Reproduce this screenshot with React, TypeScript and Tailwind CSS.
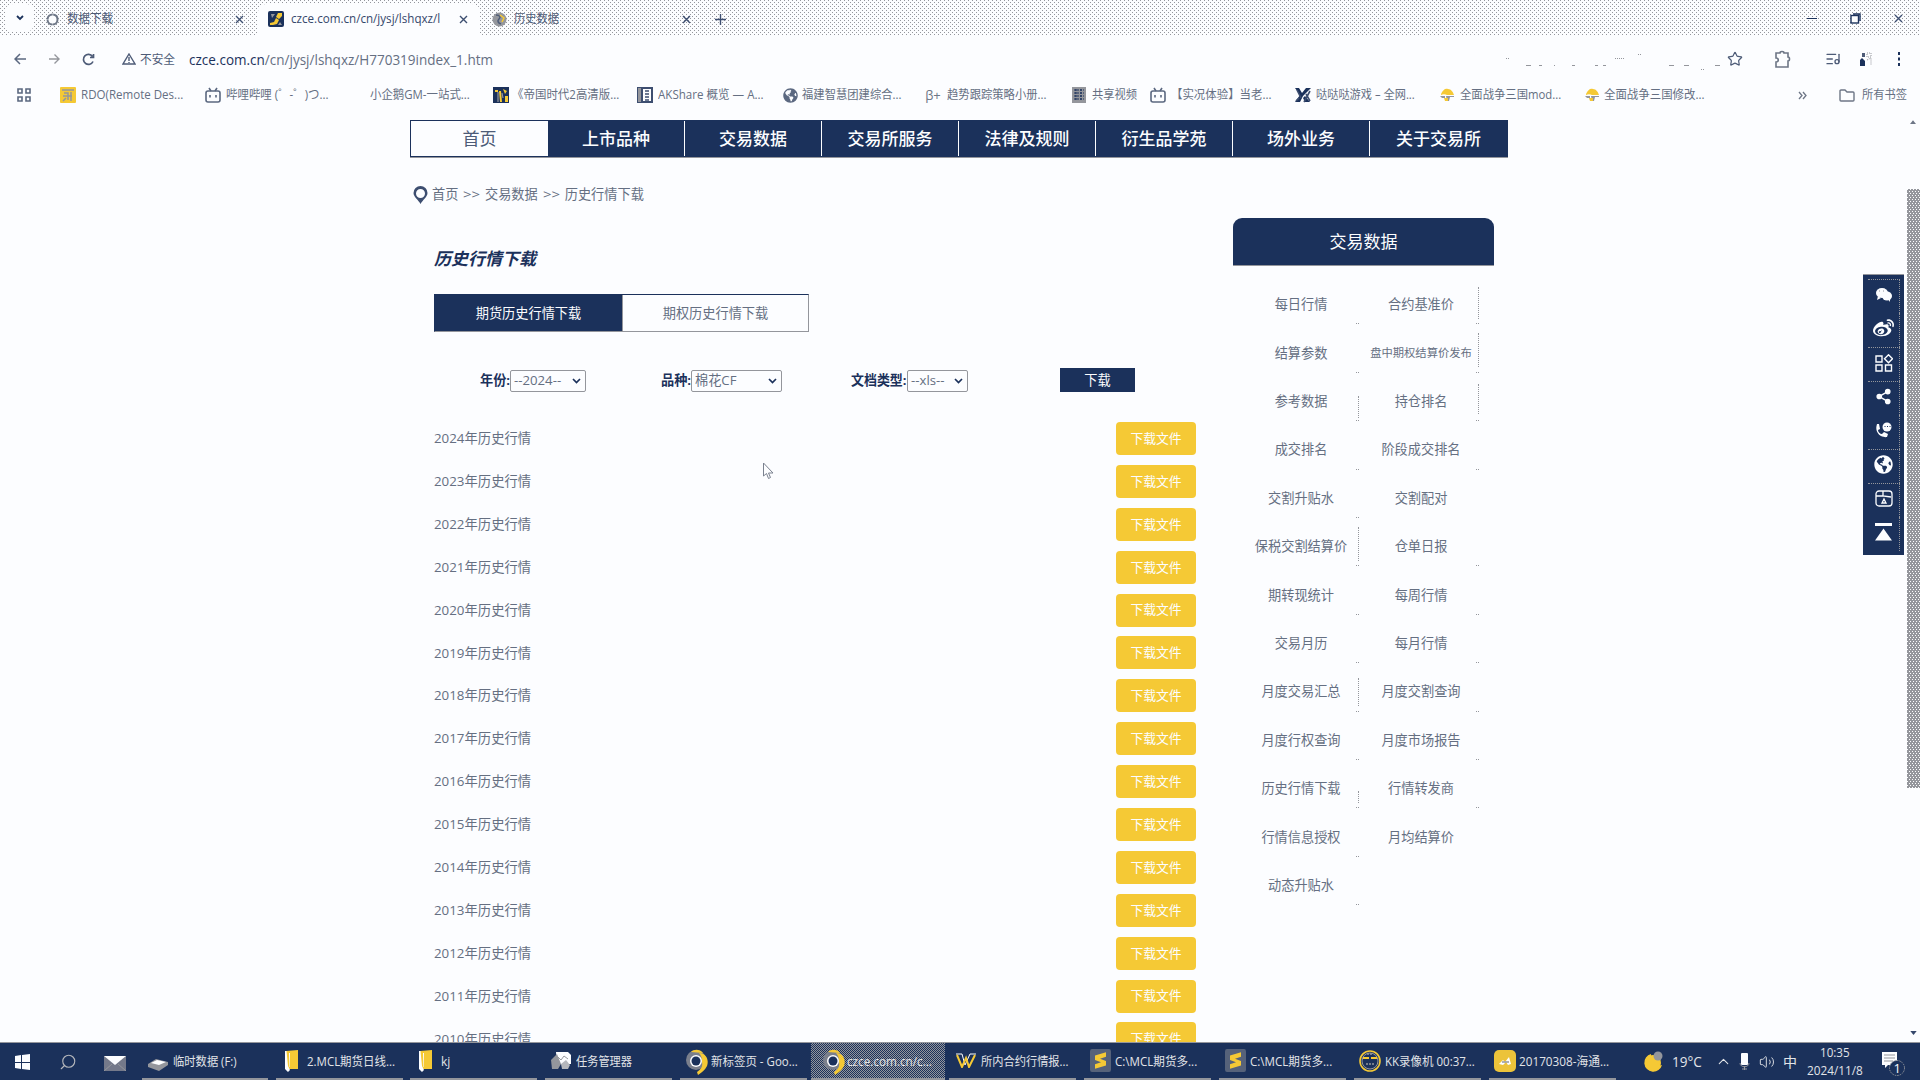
import React from "react";
import { Star, ListMusic, Search, Volume2, ChevronUp, Share2 } from "lucide-react";
import { FaWeibo, FaGlobeAmericas } from "react-icons/fa";

const DITHER =
  "bg-[conic-gradient(at_1px_1px,transparent_75%,#94969c_0),conic-gradient(at_1px_1px,transparent_75%,#94969c_0)] bg-[length:4px_4px] bg-[position:0_0,2px_2px]";
const GRAIN =
  "bg-[#94969c] bg-[conic-gradient(at_1px_1px,transparent_75%,#fcfdff_0),conic-gradient(at_1px_1px,transparent_75%,#fcfdff_0)] bg-[length:3px_4px] bg-[position:0_0,2px_2px]";
const CHECKER = "bg-[conic-gradient(#94969c_25%,transparent_0_50%,#94969c_0_75%,transparent_0)] bg-[length:2px_2px]";

function CloseX({ className = "" }: { className?: string }) {
  return (
    <svg width="9" height="9" viewBox="0 0 9 9" className={className} stroke="#3d4e70" strokeWidth="1.4">
      <path d="M1 1l7 7M8 1l-7 7" />
    </svg>
  );
}

function Bili() {
  return (
    <svg width="16" height="16" viewBox="0 0 16 16" fill="none" stroke="#5b6880" strokeWidth="1.6">
      <rect x="1" y="4" width="14" height="11" rx="2" />
      <path d="M4 1l2 3M12 1l-2 3M5 8v2.5M11 8v2.5" />
    </svg>
  );
}

function Hat() {
  return (
    <svg width="16" height="16" viewBox="0 0 16 16" className="shrink-0">
      <path d="M2 7C4 3 6 1 9 2c3 0 5 3 6 6H8C6 7 4 7 2 8z" fill="#f5c935" />
      <path d="M1 9h5v2H3zM7 9h8v1h-4l-1 4H8z" fill="#94969c" />
      <path d="M5 11h4v3H6z" fill="#f5c935" />
    </svg>
  );
}

function GameX() {
  return (
    <svg width="16" height="16" viewBox="0 0 16 16" fill="none">
      <path d="M0 1h4l3 5 4-5h5L8 9l-3 6H0l5-7zM10 9l5 6h-5L8 11z" fill="#1b315b" />
      <path d="M9 15L15 4M1 14l3-3M11 7l4 7M2 3l4 8" stroke="#3d4e70" strokeWidth="1.6" />
    </svg>
  );
}

function BookmarkIcon({ kind }: { kind: string }) {
  if (kind === "bili") return <Bili />;
  if (kind === "hat") return <Hat />;
  if (kind === "game") return <GameX />;
  if (kind === "globe") return <FaGlobeAmericas size={15} color="#5b6880" />;
  if (kind === "beta") return <span className="text-[13px] leading-4 whitespace-nowrap text-[#6d7686]">β+</span>;
  if (kind === "rdo")
    return (
      <svg width="16" height="16" viewBox="0 0 16 16">
        <rect width="16" height="16" rx="1" fill="#f5c935" />
        <path d="M2 3h12M4 6h4v7M11 5v9M3 9h9M6 11l-3 3" stroke="#94969c" strokeWidth="1.5" fill="none" />
      </svg>
    );
  if (kind === "age")
    return (
      <svg width="16" height="16" viewBox="0 0 16 16">
        <rect width="16" height="16" fill="#1b315b" />
        <path d="M2 3h3v2H2zM6 4h2l1 11H7zM10 2l4 2-2 3zM12 9h3v6h-3z" fill="#f5c935" />
        <path d="M5 5v10M9 6l1 5" stroke="#94969c" strokeWidth="1.2" />
      </svg>
    );
  if (kind === "ak")
    return (
      <svg width="16" height="16" viewBox="0 0 16 16">
        <rect width="16" height="16" fill="#3d4e70" />
        <path d="M6 2h8v12H6z" fill="#fcfdff" />
        <path d="M8 4h4M8 7h4M8 10h4M12 13H8" stroke="#3d4e70" strokeWidth="1.4" />
        <path d="M1 1h3v14H1z" fill="#94969c" />
      </svg>
    );
  if (kind === "share")
    return (
      <svg width="14" height="16" viewBox="0 0 14 16">
        <rect width="14" height="16" fill="#94969c" />
        <path d="M2 3h10M2 6h10M2 9h10M2 12h10M4 2v12M9 2v12" stroke="#1b315b" strokeWidth="1.2" strokeDasharray="2 1" />
      </svg>
    );
  return <span className="w-4" />;
}

const BOOKMARKS: { kind: string; text: string; box: string; gap: string; fit: string }[] = [
  { kind: "rdo", text: "RDO(Remote Des...", box: "w-[145px]", gap: "ml-[5px]", fit: "w-[102px]" },
  { kind: "bili", text: "哔哩哔哩 (゜-゜)つ...", box: "w-[144px]", gap: "ml-[5px]", fit: "w-[103px]" },
  { kind: "none", text: "小企鹅GM-一站式...", box: "w-[144px]", gap: "ml-[5px]", fit: "w-[100px]" },
  { kind: "age", text: "《帝国时代2高清版...", box: "w-[144px]", gap: "ml-[3px]", fit: "w-[107px]" },
  { kind: "ak", text: "AKShare 概览 — A...", box: "w-[145px]", gap: "ml-[5px]", fit: "w-[106px]" },
  { kind: "globe", text: "福建智慧团建综合...", box: "w-[143px]", gap: "ml-[4px]", fit: "w-[99px]" },
  { kind: "beta", text: "趋势跟踪策略小册...", box: "w-[146px]", gap: "ml-[6px]", fit: "w-[99px]" },
  { kind: "share", text: "共享视频", box: "w-[79px]", gap: "ml-[5px]", fit: "w-[45px]" },
  { kind: "bili", text: "【实况体验】当老...", box: "w-[145px]", gap: "ml-[5px]", fit: "w-[100px]" },
  { kind: "game", text: "哒哒哒游戏 – 全网...", box: "w-[144px]", gap: "ml-[5px]", fit: "w-[99px]" },
  { kind: "hat", text: "全面战争三国mod...", box: "w-[145px]", gap: "ml-[5px]", fit: "w-[101px]" },
  { kind: "hat", text: "全面战争三国修改...", box: "w-[145px]", gap: "ml-[4px]", fit: "w-[100px]" },
];

/** One line of text squeezed or widened to the width of its box. */
function Fit({ children, className = "" }: { children: React.ReactNode; className?: string }) {
  const outer = React.useRef<HTMLSpanElement>(null);
  const inner = React.useRef<HTMLSpanElement>(null);
  const [scale, setScale] = React.useState(1);
  React.useLayoutEffect(() => {
    if (outer.current && inner.current) setScale(outer.current.clientWidth / inner.current.offsetWidth);
  }, []);
  return (
    <span ref={outer} className={"block shrink-0 " + className}>
      <span ref={inner} className="inline-block origin-left whitespace-nowrap" style={{ transform: `scaleX(${scale})` }}>
        {children}
      </span>
    </span>
  );
}

function TabStrip() {
  return (
    <div className={"flex h-9 shrink-0 items-center " + DITHER}>
      <div className="ml-[5px] flex h-7 w-[29px] items-center justify-center rounded-lg bg-[#fcfdff]">
        <svg width="8" height="6" viewBox="0 0 8 6" fill="none" stroke="#1b315b" strokeWidth="1.8">
          <path d="M1 1l3 3 3-3" />
        </svg>
      </div>
      <div className="flex w-[224px] items-center pl-3 pt-[2px]">
        <svg width="13" height="13" viewBox="0 0 13 13" className="shrink-0">
          <circle cx="6.5" cy="6.5" r="5" fill="#fcfdff" stroke="#6d7686" strokeWidth="2" strokeDasharray="7.4 0.5" />
        </svg>
        <Fit className="ml-2 w-[46px] text-[12px] leading-4 text-[#4d5b77]">数据下载</Fit>
        <CloseX className="ml-auto mr-[14px]" />
      </div>
      <div className="mt-1 flex h-8 w-[222px] items-center rounded-t-lg bg-[#fcfdff] pb-[2px] pl-[10px]">
        <svg width="16" height="16" viewBox="0 0 16 16" className="shrink-0">
          <rect width="16" height="16" rx="2" fill="#1b315b" />
          <path d="M10 2h4v3l-3 3-3-2zM2 12l4-1 2-4 3 2-2 4-4 1H2z" fill="#f5c935" />
          <path d="M3 3h4L4 7zM12 11l2 3h-4z" fill="#94969c" />
        </svg>
        <Fit className="ml-[7px] w-[149px] text-[12px] leading-4 text-[#35476b]">czce.com.cn/cn/jysj/lshqxz/l</Fit>
        <CloseX className="ml-auto mr-3" />
      </div>
      <div className="flex w-[225px] items-center pl-3 pt-[2px]">
        <svg width="15" height="15" viewBox="0 0 15 15" className="shrink-0">
          <circle cx="7.5" cy="7.5" r="7" fill="#94969c" />
          <path d="M4 3c4 0 5 2 3 4s-1 4 2 5" stroke="#4d5b77" strokeWidth="1.5" fill="none" />
          <path d="M8 3l4 3-2 4" stroke="#f5c935" strokeWidth="1.5" fill="none" />
        </svg>
        <Fit className="ml-[7px] w-[45px] text-[12px] leading-4 text-[#4d5b77]">历史数据</Fit>
        <CloseX className="ml-auto mr-[14px]" />
      </div>
      <svg width="11" height="11" viewBox="0 0 11 11" className="ml-[10px] mt-[2px]" stroke="#3d4e70" strokeWidth="1.4">
        <path d="M5.5 0v11M0 5.5h11" />
      </svg>
      <div className="ml-auto mr-[17px] flex items-center gap-[33px]">
        <span className="h-px w-[10px] bg-[#1b315b]" />
        <svg width="11" height="11" viewBox="0 0 11 11" fill="none" stroke="#1b315b" strokeWidth="1.4">
          <rect x="1" y="2.5" width="7.5" height="7.5" fill="#fcfdff" />
          <path d="M3 1h7v7" />
        </svg>
        <CloseX />
      </div>
    </div>
  );
}

function AddressBar() {
  return (
    <div className="flex h-[46px] shrink-0 items-center pl-[14px] text-[#4d5b77]">
      <svg width="13" height="12" viewBox="0 0 13 12" fill="none" stroke="#5b6880" strokeWidth="1.5">
        <path d="M12 6H1M6 1L1 6l5 5" />
      </svg>
      <svg width="11" height="12" viewBox="0 0 12 12" fill="none" stroke="#94969c" strokeWidth="1.5" className="ml-[22px]">
        <path d="M0 6h11M6 1l5 5-5 5" />
      </svg>
      <svg width="13" height="13" viewBox="0 0 13 13" fill="none" stroke="#4d5b77" strokeWidth="1.7" className="ml-[22px]">
        <path d="M11 8.5a5 5 0 1 1-.5-5M11.500 1v3.500h-3.500" />
      </svg>
      <svg width="14" height="12" viewBox="0 0 14 12" fill="none" stroke="#4d5b77" strokeWidth="1.4" className="ml-[27px]">
        <path d="M7 1l6 10H1zM7 4v4M7 9v1" />
      </svg>
      <Fit className="ml-1 mt-px w-[35px] text-[12px] leading-4">不安全</Fit>
      <Fit className="ml-[14px] mt-px w-[304px] text-[14px] leading-5 text-[#656f82]">
        <span className="text-[#1b315b]">czce.com.cn</span>/cn/jysj/lshqxz/H770319index_1.htm
      </Fit>
      <div className="ml-auto flex items-center">
        <svg width="222" height="26" viewBox="0 0 222 26" fill="none" stroke="#94969c" className="-mr-[1px]">
          <path d="M0 12.500h4M109 12.500h9M132 8.500h4M195 23.500h4" strokeDasharray="1 1" />
          <path d="M20 19.500h5M33 19.500h3M48 19.500h1M66 19.500h3M89 19.500h3M97 19.500h3M163 19.500h5M178 19.500h5M209 19.500h5" />
        </svg>
        <Star size={16} strokeWidth={1.8} />
        <svg width="17" height="18" viewBox="0 0 17 18" fill="none" stroke="#6d7686" strokeWidth="1.600" className="ml-[31px]">
          <path d="M2 3h4c0-2 4-2 4 0h4v4c2 0 2 4 0 4v6H2v-5c3 0 3-4 0-4z" />
        </svg>
        <ListMusic size={16} strokeWidth={2} className="ml-[34px]" />
        <svg width="14" height="16" viewBox="0 0 14 16" className="ml-[18px]">
          <path d="M1 15V9l2-2 3 3v5z" fill="#1b315b" />
          <path d="M3 2h3v4H3z" fill="#4d5b77" />
          <path d="M8 2h4v4H8zM8 9l4-2v7" fill="none" stroke="#94969c" strokeDasharray="1 1" />
        </svg>
        <svg width="4" height="14" viewBox="0 0 4 14" fill="#1b315b" className="ml-[24px] mr-[19px]">
          <path d="M1 0h2v3H1zM1 5.500h2v3H1zM1 11h2v3H1z" />
        </svg>
      </div>
    </div>
  );
}

function BookmarkBar() {
  return (
    <div className="flex h-[26px] shrink-0 items-center pl-[17px] text-[12px] leading-4 text-[#656f82]">
      <svg width="14" height="14" viewBox="0 0 14 14" fill="none" stroke="#5b6880" strokeWidth="1.6">
        <path d="M1 1h4v4H1zM9 1h4v4H9zM1 9h4v4H1zM9 9h4v4H9z" />
      </svg>
      <div className="ml-[29px] flex">
        {BOOKMARKS.map((b, i) => (
          <div key={i} className={"flex shrink-0 items-center " + b.box}>
            <span className="flex w-4 shrink-0 justify-center">
              <BookmarkIcon kind={b.kind} />
            </span>
            <Fit className={b.gap + " " + b.fit}>{b.text}</Fit>
          </div>
        ))}
      </div>
      <div className="ml-auto mr-[13px] flex items-center">
        <svg width="9" height="9" viewBox="0 0 9 9" fill="none" stroke="#6d7686" strokeWidth="1.3">
          <path d="M1 1l3 3.500-3 3.500M5 1l3 3.500-3 3.500" />
        </svg>
        <svg width="16" height="13" viewBox="0 0 16 13" fill="none" stroke="#6d7686" strokeWidth="1.4" className="ml-[32px] mr-[7px]">
          <path d="M1 2a1 1 0 0 1 1-1h4l2 2h6a1 1 0 0 1 1 1v7a1 1 0 0 1-1 1H2a1 1 0 0 1-1-1z" />
        </svg>
        <Fit className="w-[45px]">所有书签</Fit>
      </div>
    </div>
  );
}

const NAV = ["首页", "上市品种", "交易数据", "交易所服务", "法律及规则", "衍生品学苑", "场外业务", "关于交易所"];

function SelectBox({ text, className }: { text: string; className: string }) {
  return (
    <span
      className={
        "mt-px flex h-[22px] shrink-0 items-center justify-between rounded-[2px] border border-[#94969c] pl-[3px] pr-[4px] text-[#656f82] " +
        className
      }
    >
      <span className="whitespace-nowrap font-normal">{text}</span>
      <svg width="9" height="6" viewBox="0 0 9 6" fill="none" stroke="#1b315b" strokeWidth="1.7" className="shrink-0">
        <path d="M1 1l3.500 3.500L8 1" />
      </svg>
    </span>
  );
}

const YEARS = Array.from({ length: 15 }, (_, i) => 2024 - i);

const SIDE = [
  "每日行情", "合约基准价", "结算参数", "盘中期权结算价发布", "参考数据", "持仓排名", "成交排名", "阶段成交排名",
  "交割升贴水", "交割配对", "保税交割结算价", "仓单日报", "期转现统计", "每周行情", "交易月历", "每月行情",
  "月度交易汇总", "月度交割查询", "月度行权查询", "月度市场报告", "历史行情下载", "行情转发商", "行情信息授权", "月均结算价", "动态升贴水",
];
const DOTTED: Record<number, string> = {
  1: "top-[6px] h-[32px]", 3: "top-[4px] h-[34px]", 4: "top-[18px] h-[22px]", 5: "top-[6px] h-[30px]",
  10: "top-[4px] h-[34px]", 16: "top-[10px] h-[28px]", 20: "top-[26px] h-[12px]",
};

function SidePanel() {
  return (
    <div className="ml-[37px] w-[261px]">
      <div className="flex h-[48px] items-center justify-center rounded-t-[9px] border-b border-[#94969c] bg-[#1b315b] pt-px text-[17px] text-[#fcfdff]">
        交易数据
      </div>
      <div className="ml-[8px] mt-[15px] grid w-[240px] grid-cols-2">
        {SIDE.map((s, i) => (
          <div
            key={s}
            className={
              "relative flex h-[48.4px] items-center justify-center whitespace-nowrap text-[#656f82] " +
              (s.length > 8 ? "text-[11.3px]" : "text-[13.2px]")
            }
          >
            {s}
            {DOTTED[i] && <i className={"absolute right-[2px] w-px border-l border-dotted border-[#94969c] " + DOTTED[i]} />}
            {i !== 9 && i !== 23 && (
              <i className="absolute right-[2px] bottom-[5px] h-px w-[3px] border-t border-dotted border-[#94969c]" />
            )}
          </div>
        ))}
      </div>
    </div>
  );
}

function ToolIcon({ i }: { i: number }) {
  const w = "#fcfdff";
  switch (i) {
    case 0:
      return (
        <svg width="18" height="16" viewBox="0 0 18 16" fill={w}>
          <ellipse cx="7" cy="6" rx="6" ry="5" />
          <ellipse cx="12" cy="9" rx="5" ry="4.500" />
          <path d="M3 9l-1 4 4-2zM13 12l2 3v-4z" />
          <path d="M4 4h1M8 4h1" stroke="#94969c" />
        </svg>
      );
    case 1:
      return <FaWeibo size={21} color={w} />;
    case 2:
      return (
        <svg width="18" height="18" viewBox="0 0 18 18" fill="none" stroke={w} strokeWidth="1.400">
          <path d="M1 2h6v6H1zM1 11h6v6H1zM10.500 11h6v6h-6zM13.500 .8l4 4-4 4-4-4z" />
        </svg>
      );
    case 3:
      return <Share2 size={17} color={w} fill={w} strokeWidth={2} />;
    case 4:
      return (
        <svg width="18" height="16" viewBox="0 0 18 16" fill={w}>
          <path d="M2 2l2 0 1 5-2 1c0 2 2 4 4 4l2-2 4 2-1 3c-6 1-13-4-10-13z" />
          <circle cx="12" cy="5" r="4.500" />
          <path d="M9.500 4.500h1M12 4.500h1M14.500 4.500h1" stroke="#1b315b" />
        </svg>
      );
    case 5:
      return <FaGlobeAmericas size={19} color={w} />;
    case 6:
      return (
        <svg width="18" height="17" viewBox="0 0 18 17" fill="none" stroke={w} strokeWidth="1.300">
          <rect x="1" y="1" width="16" height="15" rx="3" />
          <path d="M1 6h7M8 1v5l8 1M9 9l2 4H7z" />
        </svg>
      );
    default:
      return (
        <svg width="17" height="18" viewBox="0 0 17 18" fill={w}>
          <path d="M0 0h17v3H0zM8.500 5.500L17 17.500H0z" />
        </svg>
      );
  }
}

function FloatingTools() {
  return (
    <div className="absolute left-[1863px] top-[162px] flex h-[281px] w-[41px] flex-col border-t border-[#94969c] bg-[#1b315b] pb-1 pl-[5px] pr-[4px] pt-[4px]">
      {[0, 1, 2, 3, 4, 5, 6, 7].map((i) => (
        <div
          key={i}
          className={
            "flex h-[34px] items-center justify-center border-r border-dotted border-[#94969c] pb-[4px] " +
            (i === 0 || i === 2 || i === 3 || i === 5 || i === 6 ? "border-t" : "")
          }
        >
          <ToolIcon i={i} />
        </div>
      ))}
    </div>
  );
}

function Cursor() {
  return (
    <svg width="11" height="18" viewBox="0 0 11 18" className="absolute left-[763px] top-[350px]" fill="#fcfdff" stroke="#7a818f">
      <path d="M.5 1v13l3-2.500 2 5 2-1-2-4.500h4.500z" />
    </svg>
  );
}

function Page() {
  return (
    <div className="relative flex-1 overflow-hidden pt-[8px] text-[13.2px]">
      <div className="ml-[410px] flex h-[38px] w-[1098px] border-b border-[#94969c] bg-[#1b315b] text-[17px] text-[#fcfdff]">
        {NAV.map((n, i) => (
          <div
            key={n}
            className={
              i === 0
                ? "my-px ml-px flex w-[137px] shrink-0 items-center justify-center bg-[#fcfdff] text-[#4d5b77]"
                : "my-px flex w-[137px] shrink-0 items-center justify-center border-r border-[#fcfdff] font-medium last:border-r-0"
            }
          >
            {n}
          </div>
        ))}
      </div>
      <div className="ml-[413px] mt-[26px] flex h-[22px] items-center text-[#656f82]">
        <svg width="15" height="18" viewBox="0 0 15 18" className="shrink-0">
          <path
            d="M7.500 0a7 7 0 0 0-7 7c0 4 5 7 7 11 2-4 7-7 7-11a7 7 0 0 0-7-7zm0 3a4.500 4.500 0 1 1 0 9 4.500 4.500 0 0 1 0-9z"
            fill="#3d4e70"
            fillRule="evenodd"
          />
        </svg>
        <div className="ml-[4px] flex gap-[5px] whitespace-nowrap">
          <span className="w-[26px]">首页</span>
          <Fit className="w-[17px]">&gt;&gt;</Fit>
          <span>交易数据</span>
          <Fit className="w-[17px]">&gt;&gt;</Fit>
          <span>历史行情下载</span>
        </div>
      </div>
      <div className="ml-[434px] flex">
        <div className="w-[762px] pt-[39px]">
          <h1 className="h-[28px] text-[17px] leading-[28px] font-bold italic text-[#1b315b]">历史行情下载</h1>
          <div className="mt-[21px] flex h-[38px] w-[375px] border border-[#94969c] border-t-[#1b315b] border-l-[#1b315b]">
            <div className="flex w-[187px] items-center justify-center bg-[#1b315b] pt-[2px] text-[#fcfdff]">期货历史行情下载</div>
            <div className="flex flex-1 items-center justify-center border-l border-[#94969c] pt-[2px] text-[#656f82]">期权历史行情下载</div>
          </div>
          <div className="mt-[36px] flex h-[24px] items-center pl-[46px] font-bold whitespace-nowrap text-[#1b315b]">
            <Fit className="mt-[2px] w-[30px]">年份:</Fit>
            <SelectBox text="--2024--" className="w-[76px]" />
            <Fit className="ml-[75px] mt-[2px] w-[30px]">品种:</Fit>
            <SelectBox text="棉花CF" className="w-[91px]" />
            <Fit className="ml-[69px] mt-[2px] w-[56px]">文档类型:</Fit>
            <SelectBox text="--xls--" className="w-[61px]" />
            <span className="ml-[92px] flex h-[24px] w-[75px] items-center justify-center bg-[#1b315b] pt-[2px] font-normal text-[#fcfdff]">
              下载
            </span>
          </div>
          <div className="mt-[25px]">
            {YEARS.map((y) => (
              <div key={y} className="flex h-[42.9px] items-center justify-between">
                <Fit className="mt-px w-[97px] text-[#656f82]">{y}年历史行情</Fit>
                <span className="flex h-[33px] w-[80px] items-center justify-center rounded-[4px] bg-[#f5c935] text-[12.8px] text-[#fcfdff]">
                  下载文件
                </span>
              </div>
            ))}
          </div>
        </div>
        <div className="pt-[12px]">
          <SidePanel />
        </div>
      </div>
      <FloatingTools />
      <Cursor />
      <div className="absolute right-0 top-0 flex h-full w-[14px] flex-col items-center">
        <svg width="6" height="4" viewBox="0 0 8 5" className="mt-[8px]" fill="#6d7686">
          <path d="M4 0l4 5H0z" />
        </svg>
        <div className={"mt-[65px] h-[599px] w-[13px] " + GRAIN} />
        <svg width="7" height="4" viewBox="0 0 8 5" className="mb-[7px] mt-auto" fill="#35476b">
          <path d="M0 0h8L4 5z" />
        </svg>
      </div>
    </div>
  );
}

function TaskIcon({ kind }: { kind: string }) {
  switch (kind) {
    case "drive":
      return (
        <svg width="20" height="13" viewBox="0 0 20 13" className="mt-[8px]">
          <path d="M0 6l8-5 12 3v3l-9 6L0 9z" fill="#94969c" />
          <path d="M3 5l6-3 9 2-7 3z" fill="#fcfdff" />
        </svg>
      );
    case "folder":
      return (
        <svg width="14" height="22" viewBox="0 0 14 22">
          <path d="M1 1l12-1v19H1z" fill="#f5c935" />
          <path d="M0 1h1.500l1.500 15 2 4-2 2-3-3z" fill="#fcfdff" />
          <path d="M4 3h1v14H4.500z" fill="#fcfdff" />
        </svg>
      );
    case "task":
      return (
        <svg width="20" height="18" viewBox="0 0 20 18">
          <path d="M5 0h12l3 3v9H6z" fill="#fcfdff" />
          <path d="M0 8l6-6 4 10-3 5H1z" fill="#94969c" />
          <path d="M10 12l5-4 4 5-2 4h-6z" fill="#b5b7bc" />
          <path d="M7 5l3 3 3-4 4 3" stroke="#94969c" fill="none" />
        </svg>
      );
    case "chrome":
      return (
        <svg width="22" height="26" viewBox="0 0 22 26" className="mt-[2px]">
          <circle cx="10" cy="11" r="10" fill="#7a7f8c" />
          <path d="M13 4c8 0 10 8 8 13-2 4-5 6-9 9l-1-3c4-3 6-5 5-10 0-4-1-7-3-9z" fill="#f5c935" />
          <path d="M5 3c3-3 9-3 12 1z" fill="#f5c935" />
          <circle cx="10" cy="12" r="6" fill="#fcfdff" />
          <circle cx="10" cy="12" r="4.500" fill="#1b315b" />
        </svg>
      );
    case "wps":
      return (
        <svg width="22" height="15" viewBox="0 0 22 15" fill="none">
          <path d="M1 1h6l3 11 5-11h6" stroke="#fcfdff" strokeWidth="1" />
          <path d="M2 2l5 12 4-9 3 9L20 2" stroke="#f5c935" strokeWidth="2" />
        </svg>
      );
    case "sublime":
      return (
        <svg width="21" height="23" viewBox="0 0 21 21" preserveAspectRatio="none">
          <rect width="21" height="21" rx="2" fill="#56627a" />
          <path d="M16 3v4l-6 2 6 2v4L5 18v-4l6-2-6-2V6z" fill="#f5c935" />
        </svg>
      );
    case "kk":
      return (
        <svg width="22" height="22" viewBox="0 0 22 22" fill="none">
          <circle cx="11" cy="11" r="10" stroke="#f5c935" strokeWidth="1.600" />
          <circle cx="11" cy="11" r="8" stroke="#94969c" />
          <path d="M4 8h14" stroke="#f5c935" strokeWidth="2" strokeDasharray="6 2" />
          <path d="M7 14h8M8 4h6" stroke="#94969c" strokeWidth="1.500" strokeDasharray="2 1" />
        </svg>
      );
    default:
      return (
        <svg width="22" height="22" viewBox="0 0 22 22">
          <rect width="22" height="22" rx="5" fill="#ecc33a" />
          <path d="M5 14l4-4 2 2 4-5 2 7-3 1-2-3-3 3z" fill="#fcfdff" />
          <path d="M8 12h7" stroke="#94969c" strokeWidth="1.500" />
        </svg>
      );
  }
}

const TASKS = [
  { kind: "drive", text: "临时数据 (F:)", box: "w-[126px] pl-[6px]", fit: "ml-[5px] w-[64px]" },
  { kind: "folder", text: "2.MCL期货日线...", box: "ml-[8px] w-[127px] pl-[9px]", fit: "ml-[8px] w-[88px]" },
  { kind: "folder", text: "kj", box: "ml-[7px] w-[127px] pl-[9px]", fit: "ml-[8px] w-[9px]" },
  { kind: "task", text: "任务管理器", box: "ml-[8px] w-[127px] pl-[6px]", fit: "ml-[5px] w-[56px]" },
  { kind: "chrome", text: "新标签页 - Goo...", box: "ml-[8px] w-[127px] pl-[6px]", fit: "ml-[3px] w-[87px]" },
  { kind: "chrome", text: "czce.com.cn/c...", box: "ml-[4px] w-[134px] pl-[12px]", fit: "ml-[2px] w-[85px]" },
  { kind: "wps", text: "所内合约行情报...", box: "ml-[4px] w-[127px] pl-[6px]", fit: "ml-[4px] w-[87px]" },
  { kind: "sublime", text: "C:\\MCL期货多...", box: "ml-[8px] w-[127px] pl-[6px]", fit: "ml-[4px] w-[82px]" },
  { kind: "sublime", text: "C:\\MCL期货多...", box: "ml-[8px] w-[127px] pl-[6px]", fit: "ml-[4px] w-[82px]" },
  { kind: "kk", text: "KK录像机 00:37...", box: "ml-[8px] w-[127px] pl-[5px]", fit: "ml-[4px] w-[90px]" },
  { kind: "hai", text: "20170308-海通...", box: "ml-[8px] w-[127px] pl-[5px]", fit: "ml-[3px] w-[90px]" },
];

function Taskbar() {
  return (
    <div className="flex h-[38px] shrink-0 border-t border-[#94969c] bg-[#1b315b] text-[12px] leading-4 text-[#e2e4e8]">
      <div className="flex w-[142px] shrink-0 items-center pl-[15px]">
        <svg width="15" height="16" viewBox="0 0 15 16" fill="#fcfdff">
          <path d="M0 2l6-1v7H0zM7 1l8-1v8H7zM0 9h6v6l-6-1zM7 9h8v7l-8-1z" />
        </svg>
        <Search size={18} strokeWidth={1.500} className="ml-[29px] -scale-x-100 text-[#b5b7bc]" />
        <svg width="22" height="15" viewBox="0 0 22 15" className="ml-[27px] mt-[3px]">
          <rect width="22" height="15" fill="#74798a" />
          <path d="M0 0h22L11 9z" fill="#fcfdff" />
          <path d="M0 15l8-7M22 15l-8-7" stroke="#94969c" />
        </svg>
      </div>
      {TASKS.map((t, i) => (
        <div
          key={i}
          className={"flex h-full shrink-0 items-center border-b-2 border-[#94969c] " + (i === 5 ? CHECKER + " " : "") + t.box}
        >
          <span className="shrink-0">
            <TaskIcon kind={t.kind} />
          </span>
          <Fit className={"mt-[2px] " + t.fit}>{t.text}</Fit>
        </div>
      ))}
      <div className="flex flex-1 items-center pl-[27px]">
        <svg width="20" height="22" viewBox="0 0 20 22">
          <path d="M8 3a9 9 0 1 0 11 11c-3 1-5 1-7-1-3-3-4-6-4-10z" fill="#f5c935" />
          <circle cx="10" cy="12" r="8" fill="#f5c935" />
          <circle cx="15" cy="5" r="4.500" fill="#94969c" />
        </svg>
        <Fit className="ml-[9px] w-[30px] text-[14px]">19°C</Fit>
        <ChevronUp size={17} strokeWidth={1.500} className="ml-[13px]" />
        <svg width="11" height="17" viewBox="0 0 11 17" className="ml-[7px]">
          <rect x="2" width="7" height="12" rx="1" fill="#fcfdff" />
          <path d="M1 10c0 5 9 5 9 0M5.500 13v4M3 16h5" stroke="#94969c" fill="none" />
        </svg>
        <Volume2 size={16} strokeWidth={1.400} className="ml-[9px]" />
        <span className="ml-[8px] text-[14px]">中</span>
        <div className="ml-[8px] flex w-[60px] flex-col items-center gap-[2px]">
          <Fit className="w-[30px]">10:35</Fit>
          <Fit className="w-[56px]">2024/11/8</Fit>
        </div>
        <svg width="24" height="26" viewBox="0 0 24 26" className="ml-[17px] mt-[5px]">
          <path d="M0 1h15v13H6l-3 3v-3H0z" fill="#fcfdff" />
          <path d="M2 4h11M2 7h11M2 10h9" stroke="#94969c" />
          <circle cx="15" cy="17" r="7.500" fill="#1b315b" stroke="#94969c" strokeDasharray="1.500 1" />
          <text x="11.500" y="21.500" fontSize="13" fontFamily="Open Sans" fill="#fcfdff">1</text>
        </svg>
      </div>
    </div>
  );
}

export default function App() {
  return (
    <div className="flex h-[1080px] w-[1920px] flex-col overflow-hidden bg-[#fcfdff] font-['Open_Sans','Noto_Sans_CJK_SC',sans-serif]">
      <TabStrip />
      <AddressBar />
      <BookmarkBar />
      <div className="h-[4px] shrink-0" />
      <Page />
      <Taskbar />
    </div>
  );
}
